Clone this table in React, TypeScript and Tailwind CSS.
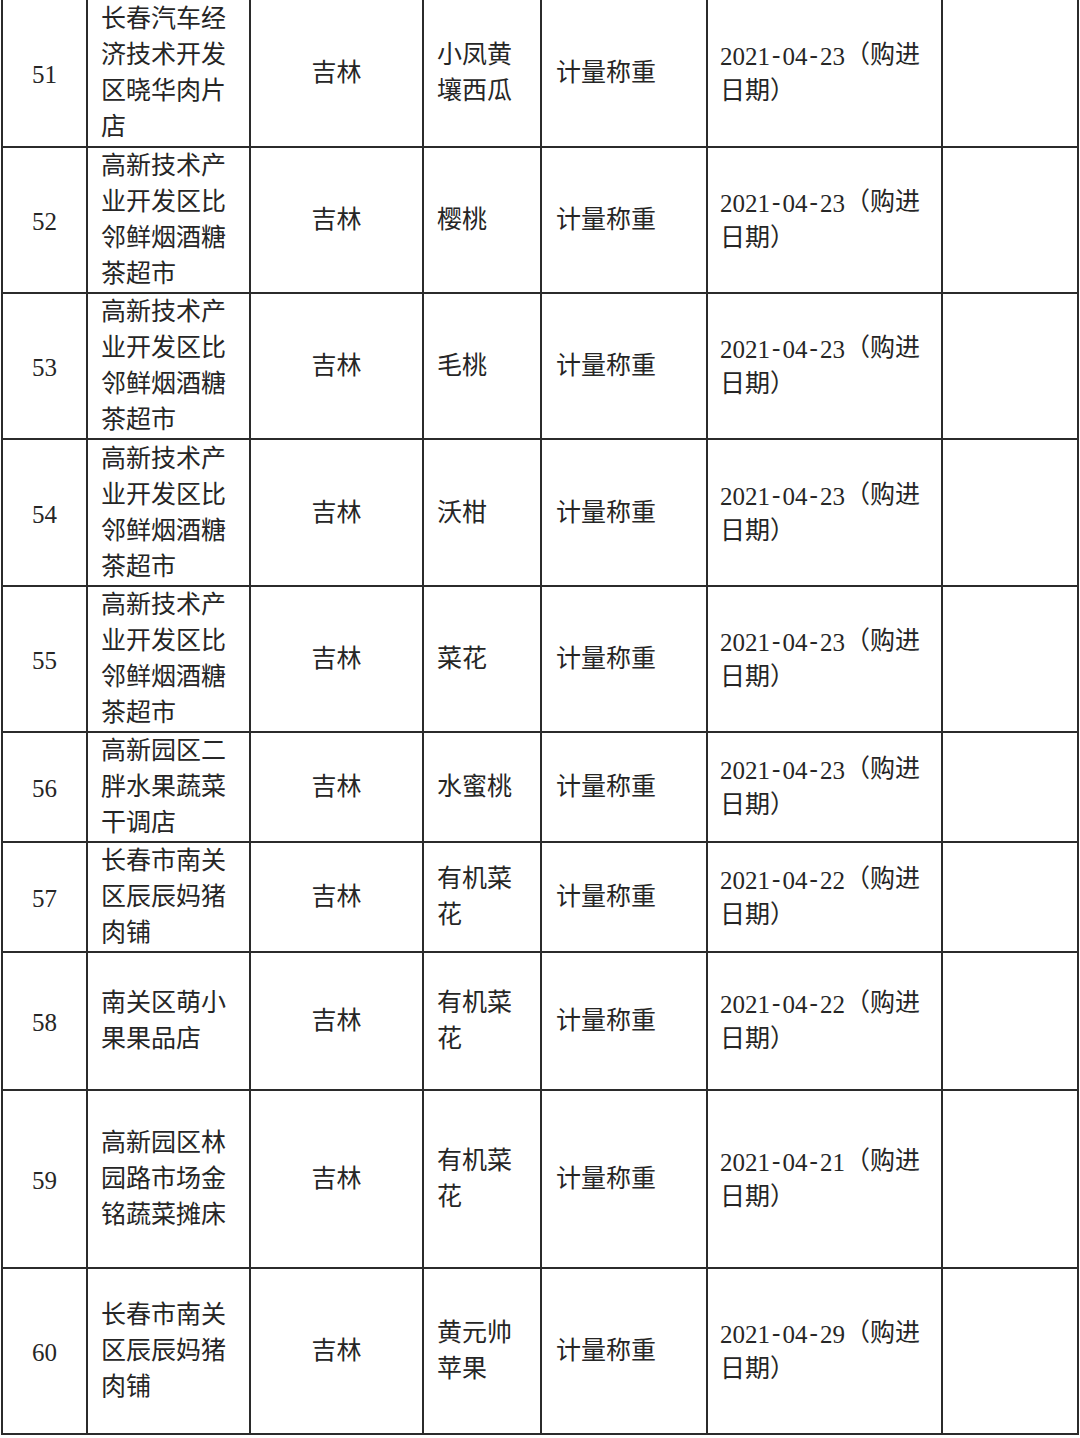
import React from "react";

type Row = {
  no: string;
  name: string[];
  region: string;
  item: string[];
  method: string;
  date: string;
};

const rows: Row[] = [
  { no: "51", name: ["长春汽车经", "济技术开发", "区晓华肉片", "店"], region: "吉林", item: ["小凤黄", "壤西瓜"], method: "计量称重", date: "2021-04-23" },
  { no: "52", name: ["高新技术产", "业开发区比", "邻鲜烟酒糖", "茶超市"], region: "吉林", item: ["樱桃"], method: "计量称重", date: "2021-04-23" },
  { no: "53", name: ["高新技术产", "业开发区比", "邻鲜烟酒糖", "茶超市"], region: "吉林", item: ["毛桃"], method: "计量称重", date: "2021-04-23" },
  { no: "54", name: ["高新技术产", "业开发区比", "邻鲜烟酒糖", "茶超市"], region: "吉林", item: ["沃柑"], method: "计量称重", date: "2021-04-23" },
  { no: "55", name: ["高新技术产", "业开发区比", "邻鲜烟酒糖", "茶超市"], region: "吉林", item: ["菜花"], method: "计量称重", date: "2021-04-23" },
  { no: "56", name: ["高新园区二", "胖水果蔬菜", "干调店"], region: "吉林", item: ["水蜜桃"], method: "计量称重", date: "2021-04-23" },
  { no: "57", name: ["长春市南关", "区辰辰妈猪", "肉铺"], region: "吉林", item: ["有机菜", "花"], method: "计量称重", date: "2021-04-22" },
  { no: "58", name: ["南关区萌小", "果果品店"], region: "吉林", item: ["有机菜", "花"], method: "计量称重", date: "2021-04-22" },
  { no: "59", name: ["高新园区林", "园路市场金", "铭蔬菜摊床"], region: "吉林", item: ["有机菜", "花"], method: "计量称重", date: "2021-04-21" },
  { no: "60", name: ["长春市南关", "区辰辰妈猪", "肉铺"], region: "吉林", item: ["黄元帅", "苹果"], method: "计量称重", date: "2021-04-29" },
];

const Lines = ({ lines }: { lines: string[] }) => (
  <div className="whitespace-nowrap">
    {lines.map((l, i) => (
      <div key={i}>{l}</div>
    ))}
  </div>
);

const DateText = ({ date }: { date: string }) => {
  const parts = date.split("-");
  return (
    <div className="whitespace-nowrap">
      <div>
        {parts.map((p, i) => (
          <React.Fragment key={i}>
            {i > 0 && <span className="inline-block w-[12.5px] text-center">-</span>}
            <span className="relative top-[2px]">{p}</span>
          </React.Fragment>
        ))}
        （购进
      </div>
      <div>日期）</div>
    </div>
  );
};

export default function App() {
  return (
    <div
      className="w-[1080px] h-[1438px] overflow-hidden bg-white text-[#262626] text-[25px] leading-[36px]"
      style={{ fontFamily: '"Liberation Serif", "Noto Sans CJK SC", serif' }}
    >
      <div className="ml-[1px] mt-[-2px] w-[1078px] p-[2px] gap-[2px] bg-[#2b2b2b] grid grid-cols-[83px_161px_171px_116px_164px_233px_134px] grid-rows-[146px_144px_144px_145px_144px_108px_108px_136px_176px_164px]">
        {rows.map((r) => (
          <React.Fragment key={r.no}>
            <div className="bg-white flex items-center justify-center pt-[4px]">{r.no}</div>
            <div className="bg-white flex items-center pl-[13px]">
              <Lines lines={r.name} />
            </div>
            <div className="bg-white flex items-center justify-center">{r.region}</div>
            <div className="bg-white flex items-center pl-[13px]">
              <Lines lines={r.item} />
            </div>
            <div className="bg-white flex items-center pl-[14px] whitespace-nowrap">{r.method}</div>
            <div className="bg-white flex items-center pl-[12px]">
              <DateText date={r.date} />
            </div>
            <div className="bg-white" />
          </React.Fragment>
        ))}
      </div>
    </div>
  );
}
